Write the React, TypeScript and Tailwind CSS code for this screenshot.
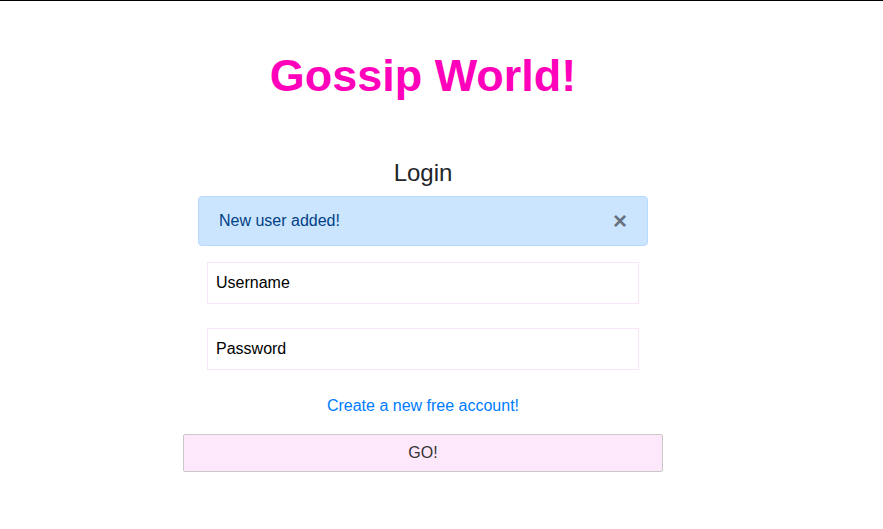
import React from "react";

export default function App() {
  return (
    <div
      className="min-h-[529px] w-full border-t border-black bg-white"
      style={{ fontFamily: '"Liberation Sans", Arial, sans-serif' }}
    >
      <div className="w-[846px] flex flex-col items-center">
        <h1 className="mt-[47px] text-[45px] leading-[56px] font-bold text-[#ff00bb]">
          Gossip World!
        </h1>
        <h4 className="mt-[54px] text-[24px] leading-[29px] text-[#212529]">Login</h4>
        <div className="mt-[9px] w-[450px] h-[50px] rounded-[4px] border border-[#b8daff] bg-[#cce5ff] text-[#004085] flex items-center justify-between pl-[20px] pr-[20px] text-[16px]">
          <span>New user added!</span>
          <span className="text-[24px] font-bold text-black opacity-50 leading-none">×</span>
        </div>
        <div className="mt-[16px] w-[432px] h-[42px] border border-[#fce4f7] flex items-center pl-[8px] text-[16px] text-black">
          Username
        </div>
        <div className="mt-[24px] w-[432px] h-[42px] border border-[#fce4f7] flex items-center pl-[8px] text-[16px] text-black">
          Password
        </div>
        <a className="mt-[24px] text-[16px] leading-[24px] text-[#007bff]" href="#">
          Create a new free account!
        </a>
        <button className="mt-[16px] w-[480px] h-[38px] border border-[#c9c9c9] bg-[#fde7fa] text-[16px] text-[#333333] rounded-[2px]">
          GO!
        </button>
      </div>
    </div>
  );
}
